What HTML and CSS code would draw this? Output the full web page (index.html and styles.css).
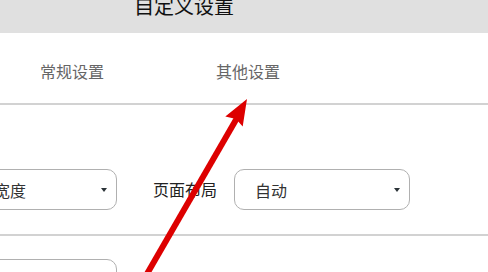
FILE: index.html
```html
<!DOCTYPE html>
<html>
<head>
<meta charset="utf-8">
<link rel="stylesheet" href="styles.css">
</head>
<body>
<div class="page">
  <header class="header"><div class="title">自定义设置</div></header>
  <nav class="tabs">
    <span class="tab">常规设置</span>
    <span class="tab">其他设置</span>
  </nav>
  <section class="row row-first">
    <div class="select select-cut"><span>固定宽度</span><i class="caret"></i></div>
    <label class="label">页面布局</label>
    <div class="select"><span>自动</span><i class="caret"></i></div>
  </section>
  <section class="row row-second">
    <div class="select select-cut"><span></span><i class="caret"></i></div>
  </section>
  <svg class="arrow" width="488" height="272" viewBox="0 0 488 272">
    <line x1="140" y1="286" x2="237" y2="118" stroke="#dd0000" stroke-width="6"/>
    <polygon points="247,99 242.7,126.5 236,119 225.3,116.5" fill="#dd0000"/>
  </svg>
</div>
</body>
</html>
```
FILE: styles.css
```css
* { box-sizing: border-box; }
html, body { margin: 0; padding: 0; }
body {
  width: 488px;
  height: 272px;
  overflow: hidden;
  background: #fff;
  font-family: "Noto Sans CJK SC", "Noto Sans", sans-serif;
}
.page { position: relative; width: 488px; height: 272px; overflow: hidden; }
.header {
  height: 33px;
  background: #e0e0e0;
  overflow: hidden;
}
.title {
  margin-left: 134px;
  margin-top: -6px;
  font-size: 20px;
  line-height: 24px;
  color: #111;
}
.tabs {
  height: 72px;
  border-bottom: 2px solid #d2d2d2;
  display: flex;
  align-items: center;
  padding-left: 40px;
  padding-top: 5px;
  gap: 112px;
}
.tab {
  font-size: 16px;
  color: #666;
  line-height: 20px;
}
.row {
  display: flex;
  align-items: center;
}
.row-first {
  height: 131px;
  padding-top: 64px;
  align-items: flex-start;
  border-bottom: 2px solid #d2d2d2;
}
.row-second {
  padding-top: 23px;
  align-items: flex-start;
}
.select {
  width: 176px;
  height: 41px;
  border: 1px solid #b0b0b0;
  border-radius: 10px;
  display: flex;
  align-items: center;
  padding-left: 20px;
  padding-right: 9px;
  font-size: 16px;
  color: #333;
  flex-shrink: 0;
}
.select span { flex: 1; line-height: 20px; }
.select-cut { margin-left: -59px; }
.caret {
  width: 0; height: 0;
  border-left: 3.5px solid transparent;
  border-right: 3.5px solid transparent;
  border-top: 4px solid #2b3338;
}
.label {
  margin-left: 36px;
  margin-right: 17px;
  font-size: 16px;
  color: #222;
  line-height: 41px;
}
.arrow { position: absolute; left: 0; top: 0; }
```
